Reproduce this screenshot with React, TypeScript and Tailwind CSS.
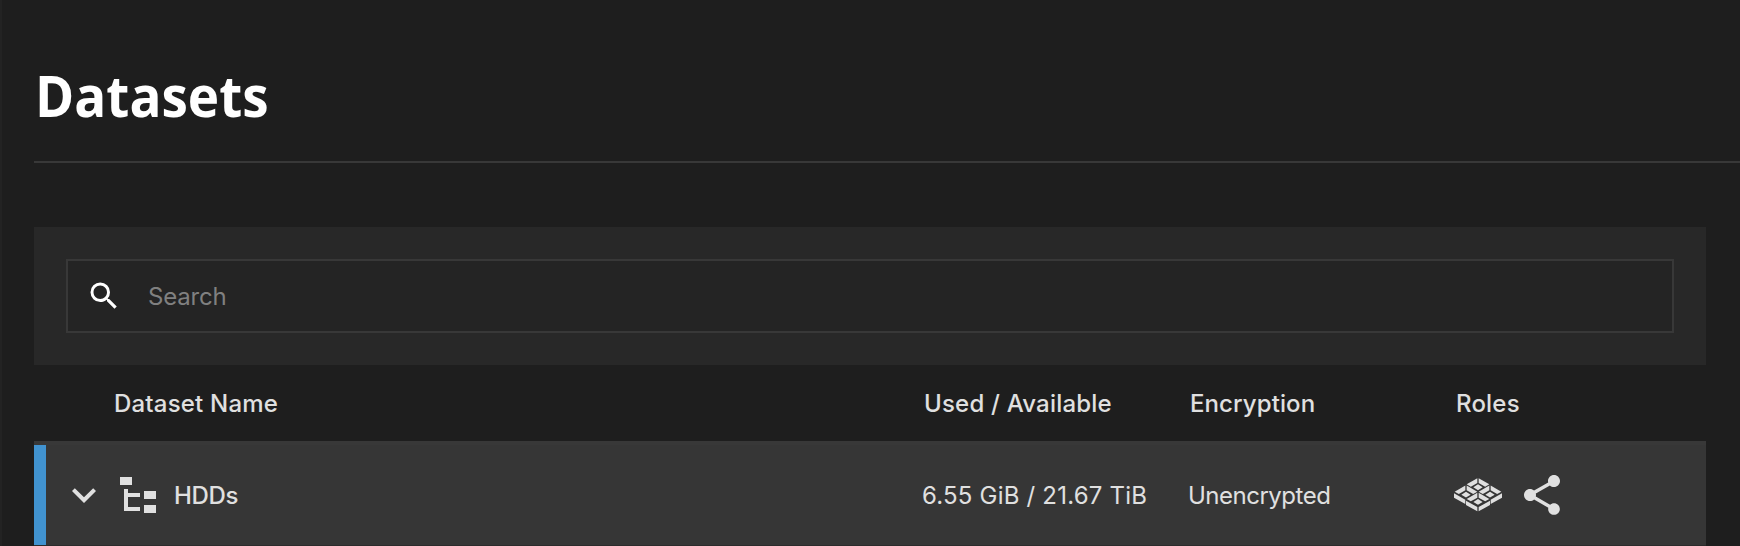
import type { ReactNode } from 'react';
import { MdSearch, MdShare, MdExpandMore } from 'react-icons/md';

function TreeIcon() {
  return (
    <svg viewBox="0 0 24 24" className="size-12 shrink-0" fill="currentColor">
      <path d="M3 3H9V7H3ZM15 10H21V14H15ZM15 17H21V21H15ZM13 13H7V18H13V20H5V9H7V11H13Z" />
    </svg>
  );
}

const LEFT_WALL = 'M-36 -4L-2 15V28L-36 9Z';
const RIGHT_WALL = 'M36 -4L2 15V28L36 9Z';

// Four open boxes on an isometric grid; only the outer front walls are drawn.
const CELLS = [
  { x: 72, y: 49, walls: '' },
  { x: 36, y: 71, walls: LEFT_WALL },
  { x: 108, y: 71, walls: RIGHT_WALL },
  { x: 72, y: 93, walls: LEFT_WALL + RIGHT_WALL },
];

function SystemDatasetIcon() {
  return (
    <svg viewBox="0 0 144 144" className="size-12 shrink-0" fill="currentColor">
      {CELLS.map((cell) => (
        <g key={`${cell.x}-${cell.y}`} transform={`translate(${cell.x} ${cell.y})`}>
          <path d="M-2 -27.500L-34 -9L-21.500 -2L-2 -13ZM2 -27.500L34 -9L21.500 -2L2 -13ZM0 -9L14 0L0 8.500L-14 0Z" />
          {cell.walls && <path d={cell.walls} />}
        </g>
      ))}
    </svg>
  );
}

function Column({ className, children }: { className: string; children: ReactNode }) {
  return <div className={`flex shrink-0 items-center whitespace-nowrap ${className}`}>{children}</div>;
}

export default function App() {
  return (
    <div className="flex h-[546px] w-full flex-col overflow-hidden border-l-2 border-[#232323] bg-[#1e1e1e] pl-8 font-['Inter',sans-serif] text-[24px] text-[#e0e0e0]">
      <header className="flex h-[163px] shrink-0 items-end border-b-2 border-[#383838] pb-[26px]">
        <h1 className="ml-px origin-left scale-x-[0.915] font-['Open_Sans',sans-serif] text-[58px] leading-[80px] font-bold text-white">
          Datasets
        </h1>
      </header>

      <main className="mt-16 mr-[34px] flex flex-col">
        <div className="flex h-[138px] bg-[#282828] p-8">
          <label className="flex h-[74px] flex-1 items-center border-2 border-[#383838] bg-[#242424] pl-[18px]">
            <MdSearch className="size-9 shrink-0 text-white" />
            <input
              placeholder="Search"
              className="ml-[26px] h-full flex-1 bg-transparent tracking-[-0.2px] outline-none placeholder:text-[#808080]"
            />
          </label>
        </div>

        <div className="flex h-[76px] items-center pt-[2px] font-medium tracking-[0.2px]">
          <Column className="w-[890px] pl-20">Dataset Name</Column>
          <Column className="w-[266px]">Used / Available</Column>
          <Column className="w-[266px] tracking-[0.1px]">Encryption</Column>
          <Column className="flex-1">Roles</Column>
        </div>

        <div className="flex h-[105px] border-t-4 border-b border-t-[#383838] border-b-[#2c2c2c] bg-[#363636]">
          <div className="w-3 shrink-0 bg-[#4193d0]" />
          <Column className="w-[876px] pl-[14px] font-medium">
            <MdExpandMore className="size-12 shrink-0" />
            <span className="ml-[6px] flex">
              <TreeIcon />
            </span>
            <span className="ml-3 pt-[2px] tracking-[-0.3px]">HDDs</span>
          </Column>
          <Column className="w-[266px] pt-[2px] tracking-[0.2px] [font-weight:385]">6.55 GiB / 21.67 TiB</Column>
          <Column className="w-[266px] pt-[2px] tracking-[-0.5px] [font-weight:385]">Unencrypted</Column>
          <Column className="gap-4">
            <SystemDatasetIcon />
            <MdShare className="size-12" />
          </Column>
        </div>
      </main>
    </div>
  );
}
